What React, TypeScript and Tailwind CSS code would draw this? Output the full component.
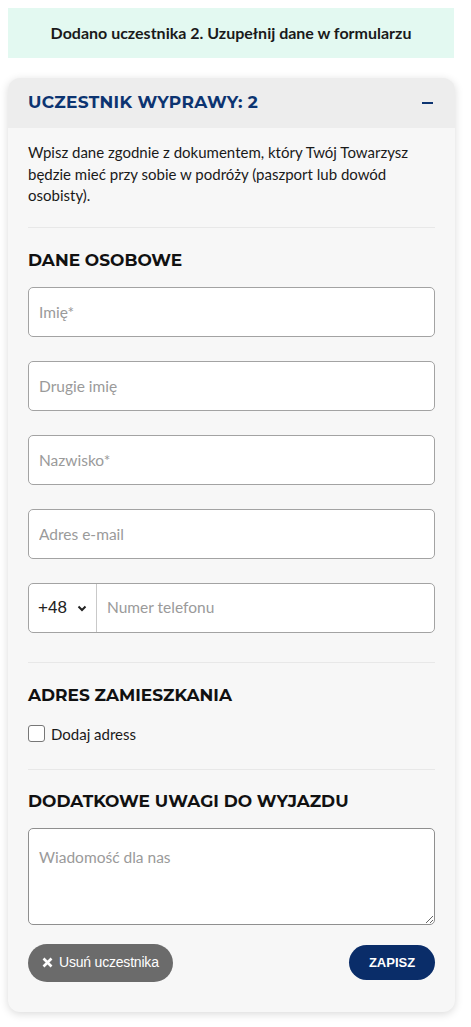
const heading = "font-['Montserrat','Inter',sans-serif] font-bold uppercase text-[17px] text-[#111]";
const field =
  "w-full h-[50px] rounded-[5px] border border-[#a3a3a3] bg-white px-[10px] text-[15.5px] text-[#222] placeholder:text-[#9a9a9a] outline-none";

const App = () => {
  return (
    <div className="min-h-screen bg-white font-['Lato',sans-serif] px-2 pt-2 pb-4">
      {/* Success banner */}
      <div className="bg-[#e3f9f1] h-[50px] flex items-center justify-center text-[16px] font-bold text-[#1a1a1a] w-[446px]">
        Dodano uczestnika 2. Uzupełnij dane w formularzu
      </div>

      {/* Participant card */}
      <div className="mt-5 w-[447px] rounded-[12px] bg-[#f7f7f7] shadow-[0_2px_8px_rgba(0,0,0,0.15)] overflow-hidden">
        <div className="h-[50px] bg-[#ededed] flex items-center justify-between px-5">
          <span className="font-['Montserrat','Inter',sans-serif] font-bold text-[17px] text-[#0c3471] tracking-[0.3px]">
            UCZESTNIK WYPRAWY: 2
          </span>
          <span className="block w-[11px] h-[2px] bg-[#0c3471] mr-[2px]"></span>
        </div>

        <div className="px-5 pt-[14px] pb-[30px]">
          <p className="text-[15px] leading-[21.5px] text-[#1a1a1a]">
            Wpisz dane zgodnie z dokumentem, który Twój Towarzysz będzie mieć przy sobie w podróży (paszport lub dowód osobisty).
          </p>

          <div className="h-px bg-[#e8e8e8] mt-[20px]"></div>

          <h2 className={`${heading} mt-[20px]`}>Dane osobowe</h2>

          <div className="mt-[14px] flex flex-col gap-[24px]">
            <input className={field} placeholder="Imię*" />
            <input className={field} placeholder="Drugie imię" />
            <input className={field} placeholder="Nazwisko*" />
            <input className={field} placeholder="Adres e-mail" />
            <div className="flex h-[50px] rounded-[5px] border border-[#a3a3a3] bg-white">
              <div className="w-[68px] flex items-center gap-[10px] pl-[9px] border-r border-[#c9c9c9] text-[17px] text-[#222] font-['Liberation_Sans',sans-serif]">
                +48
                <svg width="10" height="7" viewBox="0 0 10 7" className="mt-[1px]">
                  <path d="M1.5 1.5 L5 5 L8.5 1.5" fill="none" stroke="#222" strokeWidth="2" />
                </svg>
              </div>
              <input
                className="flex-1 min-w-0 px-[10px] text-[15.5px] placeholder:text-[#9a9a9a] outline-none bg-transparent"
                placeholder="Numer telefonu"
              />
            </div>
          </div>

          <div className="h-px bg-[#e8e8e8] mt-[29px]"></div>

          <h2 className={`${heading} mt-[20px]`}>Adres zamieszkania</h2>

          <label className="mt-[14px] flex items-center gap-[6px] text-[15px] text-[#1a1a1a]">
            <span className="block w-[17px] h-[17px] rounded-[3px] border border-[#777] bg-white"></span>
            Dodaj adress
          </label>

          <div className="h-px bg-[#e8e8e8] mt-[24px]"></div>

          <h2 className={`${heading} mt-[19px]`}>Dodatkowe uwagi do wyjazdu</h2>

          <textarea
            className="mt-[13px] block w-full h-[97px] resize-y rounded-[5px] border border-[#8f8f8f] bg-white px-[10px] pt-[17px] text-[15.5px] placeholder:text-[#9a9a9a] outline-none"
            placeholder="Wiadomość dla nas"
          ></textarea>

          <div className="mt-[19px] flex items-center justify-between">
            <button className="h-[38px] rounded-full bg-[#6b6b6b] text-white pl-[14px] pr-[14px] flex items-center gap-[6px] text-[14px] tracking-[-0.2px] font-['Liberation_Sans',sans-serif]">
              <svg width="11" height="11" viewBox="0 0 11 11">
                <path d="M1.5 1.5 L9.5 9.5 M9.5 1.5 L1.5 9.5" stroke="#fff" strokeWidth="2.6" />
              </svg>
              Usuń uczestnika
            </button>
            <button className="h-[35px] w-[86px] rounded-full bg-[#0a2d69] text-white text-[13px] font-bold font-['Liberation_Sans',sans-serif]">
              ZAPISZ
            </button>
          </div>
        </div>
      </div>
    </div>
  );
};

export default App;
